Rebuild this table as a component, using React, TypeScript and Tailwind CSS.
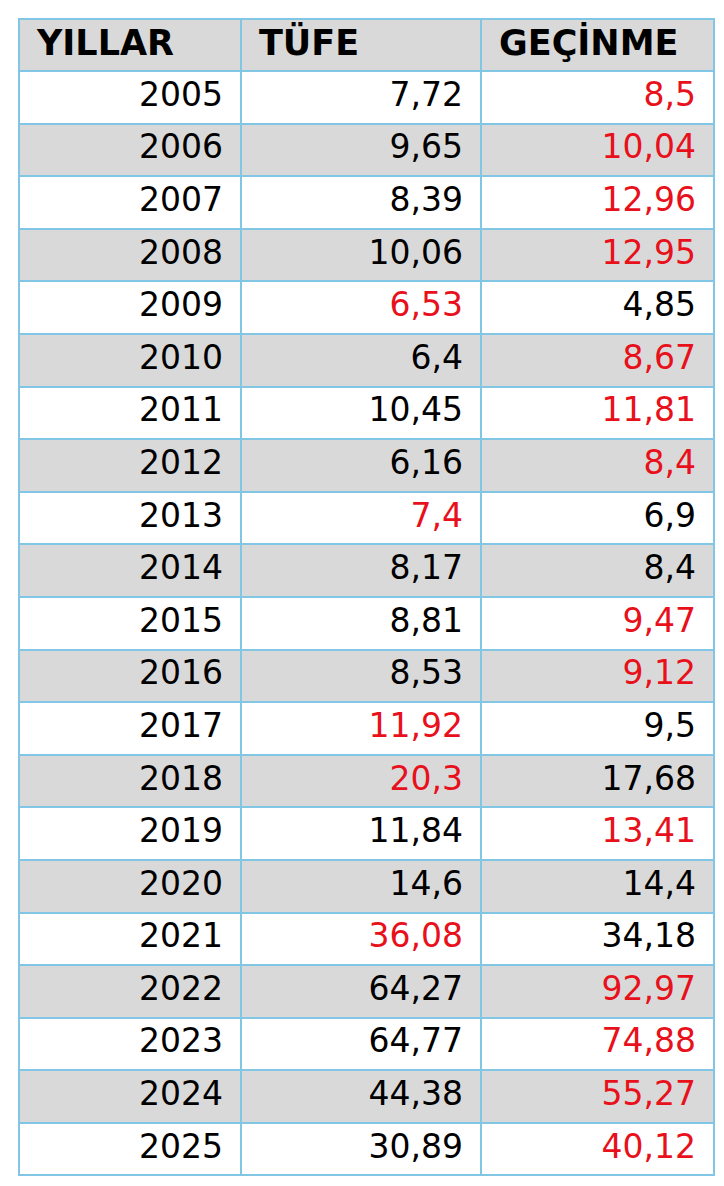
const rows: [string, string, string, 'a' | 'b' | '-'][] = [
  ['2005', '7,72', '8,5', 'b'],
  ['2006', '9,65', '10,04', 'b'],
  ['2007', '8,39', '12,96', 'b'],
  ['2008', '10,06', '12,95', 'b'],
  ['2009', '6,53', '4,85', 'a'],
  ['2010', '6,4', '8,67', 'b'],
  ['2011', '10,45', '11,81', 'b'],
  ['2012', '6,16', '8,4', 'b'],
  ['2013', '7,4', '6,9', 'a'],
  ['2014', '8,17', '8,4', '-'],
  ['2015', '8,81', '9,47', 'b'],
  ['2016', '8,53', '9,12', 'b'],
  ['2017', '11,92', '9,5', 'a'],
  ['2018', '20,3', '17,68', 'a'],
  ['2019', '11,84', '13,41', 'b'],
  ['2020', '14,6', '14,4', '-'],
  ['2021', '36,08', '34,18', 'a'],
  ['2022', '64,27', '92,97', 'b'],
  ['2023', '64,77', '74,88', 'b'],
  ['2024', '44,38', '55,27', 'b'],
  ['2025', '30,89', '40,12', 'b'],
]

export default function App() {
  const cell = 'border-2 border-[#82c6e6] px-[17px] py-0 pb-[5px] align-middle'
  return (
    <div className="min-h-[1186px] bg-white px-[18px] pt-[18px] font-['DejaVu_Sans',Verdana,sans-serif] text-[33px] leading-[36px] text-black">
      <table className="w-[697px] table-fixed border-collapse border-2 border-[#82c6e6]">
        <colgroup>
          <col className="w-[222px]" />
          <col className="w-[240px]" />
          <col />
        </colgroup>
        <thead>
          <tr className="h-[52px] bg-[#d9d9d9] text-[35px]">
            <th className={`${cell} text-left font-bold`}>YILLAR</th>
            <th className={`${cell} text-left font-bold`}>TÜFE</th>
            <th className={`${cell} text-left font-bold`}>GEÇİNME</th>
          </tr>
        </thead>
        <tbody>
          {rows.map(([year, tufe, gecinme, hi], i) => (
            <tr key={year} className={`h-[52.6px] ${i % 2 === 1 ? 'bg-[#d9d9d9]' : 'bg-white'}`}>
              <td className={`${cell} text-right`}>{year}</td>
              <td className={`${cell} text-right ${hi === 'a' ? 'text-[#e8101a]' : ''}`}>{tufe}</td>
              <td className={`${cell} text-right ${hi === 'b' ? 'text-[#e8101a]' : ''}`}>{gecinme}</td>
            </tr>
          ))}
        </tbody>
      </table>
    </div>
  )
}
